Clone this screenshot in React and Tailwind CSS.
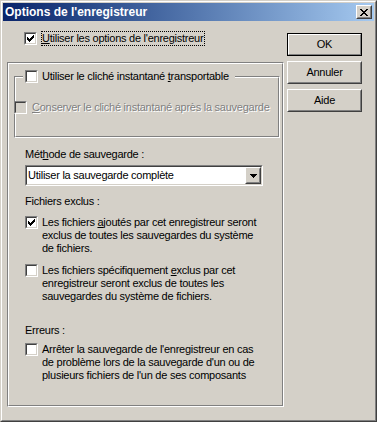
import React from 'react';

const font = "font-['Liberation_Sans',Arial,sans-serif]";

function Check() {
    return (
        <svg width="7" height="7" viewBox="0 0 7 7" shapeRendering="crispEdges">
            <path
                fill="#000"
                d="M6 0h1v1h-1z M5 1h2v1h-2z M0 2h1v1h-1z M4 2h3v1h-3z M0 3h2v1h-2z M3 3h3v1h-3z M0 4h5v1h-5z M1 5h3v1h-3z M2 6h1v1h-1z"
            />
        </svg>
    );
}

function Box({ checked, disabled }) {
    return (
        <div className="w-[13px] h-[13px] shrink-0 border border-t-[#808080] border-l-[#808080] border-r-white border-b-white">
            <div
                className={`w-full h-full border border-t-[#404040] border-l-[#404040] border-r-[#d4d0c8] border-b-[#d4d0c8] flex items-center justify-center ${
                    disabled ? 'bg-[#d4d0c8]' : 'bg-white'
                }`}
            >
                {checked && <Check />}
            </div>
        </div>
    );
}

function CheckRow({ checked, children }) {
    return (
        <div className="flex items-start">
            <Box checked={checked} />
            <div className="ml-[4px] leading-[13px]">{children}</div>
        </div>
    );
}

function Button({ children, primary }) {
    if (primary) {
        return (
            <div className="w-[75px] h-[23px] border border-black">
                <div className="w-full h-full border border-t-white border-l-white border-r-[#808080] border-b-[#808080] flex items-center justify-center">
                    {children}
                </div>
            </div>
        );
    }
    return (
        <div className="w-[75px] h-[23px] border border-t-white border-l-white border-r-[#404040] border-b-[#404040]">
            <div className="w-full h-full border border-t-[#d4d0c8] border-l-[#d4d0c8] border-r-[#808080] border-b-[#808080] flex items-center justify-center">
                {children}
            </div>
        </div>
    );
}

function U({ children }) {
    return <span className="underline decoration-1 underline-offset-[1px]">{children}</span>;
}

export default function App() {
    return (
        <div className={`w-[377px] h-[422px] bg-[#d4d0c8] text-black text-[11px] tracking-[-0.25px] ${font}`}>
            <div className="w-full h-full border border-t-[#d4d0c8] border-l-[#d4d0c8] border-r-[#404040] border-b-[#404040]">
                <div className="w-full h-full border border-t-white border-l-white border-r-[#808080] border-b-[#808080] p-px flex flex-col">
                    {/* title bar */}
                    <div className="h-[18px] shrink-0 bg-gradient-to-r from-[#0a246a] to-[#a6caf0] flex items-center justify-between pl-[2px] pr-[2px]">
                        <span className="text-white font-bold text-[12px] tracking-normal leading-[18px]">
                            Options de l'enregistreur
                        </span>
                        <div className="w-[16px] h-[14px] border border-t-white border-l-white border-r-[#404040] border-b-[#404040]">
                            <div className="w-full h-full bg-[#d4d0c8] border border-t-[#d4d0c8] border-l-[#d4d0c8] border-r-[#808080] border-b-[#808080] flex items-center justify-center">
                                <svg width="8" height="7" viewBox="0 0 8 7" shapeRendering="crispEdges">
                                    <path
                                        fill="#000"
                                        d="M0 0h2v1h-2z M6 0h2v1h-2z M1 1h2v1h-2z M5 1h2v1h-2z M2 2h4v1h-4z M3 3h2v1h-2z M2 4h4v1h-4z M1 5h2v1h-2z M5 5h2v1h-2z M0 6h2v1h-2z M6 6h2v1h-2z"
                                    />
                                </svg>
                            </div>
                        </div>
                    </div>

                    {/* body */}
                    <div className="flex flex-1">
                        <div className="w-[281px] flex flex-col">
                            <div className="flex items-start mt-[10px] ml-[21px]">
                                <div className="mt-px">
                                    <Box checked />
                                </div>
                                <div className="ml-[4px] border border-dotted border-black leading-[13px] pr-px">
                                    <U>U</U>tiliser les options de l'enregistreur
                                </div>
                            </div>

                            {/* main panel */}
                            <div className="mt-[16px] ml-[4px] w-[277px] h-[345px] border border-t-[#808080] border-l-[#808080] border-r-white border-b-white">
                                <div className="w-full h-full border border-t-white border-l-white border-r-[#808080] border-b-[#808080] flex flex-col pl-[16px]">
                                    {/* group box */}
                                    <div className="relative mt-[12px] -ml-[11px] w-[266px] h-[62px] shrink-0 border border-t-[#808080] border-l-[#808080] border-r-white border-b-white">
                                        <div className="w-full h-full border border-t-white border-l-white border-r-[#808080] border-b-[#808080] pt-[23px]">
                                            <div className="flex items-center -ml-[2px]">
                                                <Box disabled />
                                                <span className="ml-[5px] leading-[13px] text-[#808080] [text-shadow:1px_1px_0_#ffffff]">
                                                    <U>C</U>onserver le cliché instantané après la sauvegarde
                                                </span>
                                            </div>
                                        </div>
                                        <div className="absolute top-[-7px] left-[8px] bg-[#d4d0c8] pl-[2px] pr-[6px] flex items-center">
                                            <Box />
                                            <span className="ml-[4px] leading-[13px]">
                                                Utiliser le cliché instantané <U>t</U>ransportable
                                            </span>
                                        </div>
                                    </div>

                                    <div className="mt-[10px] leading-[13px]">
                                        Mét<U>h</U>ode de sauvegarde :
                                    </div>

                                    {/* combo */}
                                    <div className="mt-[4px] w-[238px] h-[21px] shrink-0 border border-t-[#808080] border-l-[#808080] border-r-white border-b-white">
                                        <div className="w-full h-full border border-t-[#404040] border-l-[#404040] border-r-[#d4d0c8] border-b-[#d4d0c8] bg-white flex items-center">
                                            <span className="flex-1 pl-px leading-[13px]">Utiliser la sauvegarde complète</span>
                                            <div className="w-[16px] h-[17px] border border-t-white border-l-white border-r-[#404040] border-b-[#404040]">
                                                <div className="w-full h-full bg-[#d4d0c8] border border-t-[#d4d0c8] border-l-[#d4d0c8] border-r-[#808080] border-b-[#808080] flex items-center justify-center">
                                                    <svg width="7" height="4" viewBox="0 0 7 4" shapeRendering="crispEdges">
                                                        <path fill="#000" d="M0 0h7v1h-7z M1 1h5v1h-5z M2 2h3v1h-3z M3 3h1v1h-1z" />
                                                    </svg>
                                                </div>
                                            </div>
                                        </div>
                                    </div>

                                    <div className="mt-[9px] leading-[13px]">Fichiers exclus :</div>

                                    <div className="mt-[8px]">
                                        <CheckRow checked>
                                            Les fichiers <U>a</U>joutés par cet enregistreur seront
                                            <br />
                                            exclus de toutes les sauvegardes du système
                                            <br />
                                            de fichiers.
                                        </CheckRow>
                                    </div>

                                    <div className="mt-[9px]">
                                        <CheckRow>
                                            Les fichiers spécifiquement <U>e</U>xclus par cet
                                            <br />
                                            enregistreur seront exclus de toutes les
                                            <br />
                                            sauvegardes du système de fichiers.
                                        </CheckRow>
                                    </div>

                                    <div className="mt-[21px] leading-[13px]">Erreurs :</div>

                                    <div className="mt-[6px]">
                                        <CheckRow>
                                            Arrêter la sauvegarde de l'enregistreur en cas
                                            <br />
                                            de problème lors de la sauvegarde d'un ou de
                                            <br />
                                            plusieurs fichiers de l'un de ses composants
                                        </CheckRow>
                                    </div>
                                </div>
                            </div>
                        </div>

                        {/* buttons */}
                        <div className="ml-[3px] mt-[12px] flex flex-col gap-[5px]">
                            <Button primary>OK</Button>
                            <Button>Annuler</Button>
                            <Button>Aide</Button>
                        </div>
                    </div>
                </div>
            </div>
        </div>
    );
}
